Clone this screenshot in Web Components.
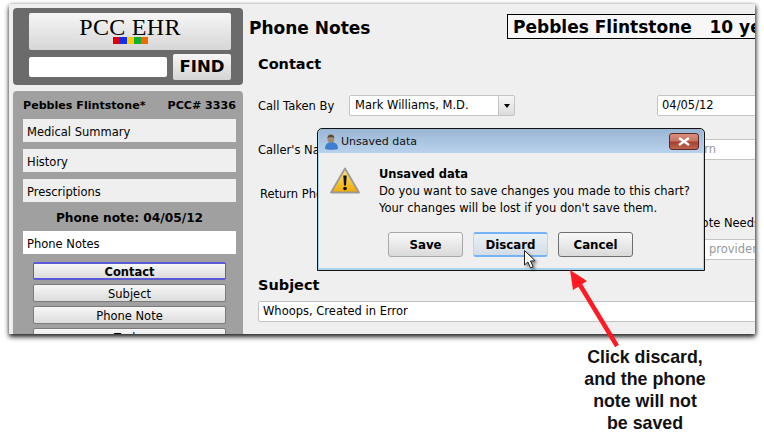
<!DOCTYPE html>
<html lang="en">
<head>
<meta charset="utf-8">
<title>Phone Notes</title>
<style>
  html, body { margin: 0; height: 100%; background: #fff; }
  body { font-family: "DejaVu Sans", sans-serif; overflow: hidden; }
</style>
</head>
<body>
<pcc-shot>
  <pcc-sidebar slot="side">
    <side-item>Medical Summary</side-item>
    <side-item>History</side-item>
    <side-item>Prescriptions</side-item>
    <side-label>Phone note: 04/05/12</side-label>
    <side-item active>Phone Notes</side-item>
    <nav-btn current>Contact</nav-btn>
    <nav-btn>Subject</nav-btn>
    <nav-btn>Phone Note</nav-btn>
    <nav-btn>Tasks</nav-btn>
  </pcc-sidebar>
  <phone-form slot="main"></phone-form>
  <unsaved-dialog slot="over"></unsaved-dialog>
  <discard-callout slot="note"></discard-callout>
</pcc-shot>

<script>
// helper: every element gets open shadow root from a string
function shadow(el, html) {
    el.attachShadow({ mode: "open" }).innerHTML = html;
}

class PccShot extends HTMLElement {
    connectedCallback() {
        shadow(this, `
        <style>
            :host { display: block; width: 764px; height: 433px; position: relative; overflow: hidden; background: #fff; }
            .frame {
                position: absolute; left: 9px; top: 4px; width: 746px; height: 330px;
                background: #efefef; overflow: hidden;
                box-shadow: 0 3px 5px rgba(0,0,0,.75), 1px 1px 4px rgba(0,0,0,.5);
                display: flex;
            }
            .side { flex: 0 0 234px; }
            .main { flex: 1; min-width: 0; }
        </style>
        <div class="frame">
            <div class="side"><slot name="side"></slot></div>
            <div class="main"><slot name="main"></slot></div>
        </div>
        <slot name="over"></slot>
        <slot name="note"></slot>`);
    }
}

class PccSidebar extends HTMLElement {
    connectedCallback() {
        shadow(this, `
        <style>
            :host { display: block; padding: 4px 0 0 4px; font-size: 12px; color: #000; }
            .top {
                width: 230px; height: 77px; box-sizing: border-box; background: #6b6b6b; border-radius: 4px;
                padding: 5px 12px 0 16px; display: flex; flex-direction: column; gap: 4px;
            }
            .logo {
                height: 37px; border-radius: 2px; background: linear-gradient(#f6f6f6, #d6d6d6);
                display: flex; flex-direction: column; align-items: center;
            }
            .logo b {
                font: 400 24px/22px "Liberation Serif", serif; color: #000; margin-top: 3px; letter-spacing: .3px;
            }
            .chips { display: flex; margin-top: -1px; }
            .chips i { width: 7px; height: 7px; }
            .find { display: flex; align-items: center; gap: 6px; }
            .find span { width: 138px; height: 20px; background: #fff; border-radius: 2px; }
            .find b {
                width: 58px; height: 26px; line-height: 26px; text-align: center; border-radius: 2px;
                background: linear-gradient(#f6f6f6, #d4d4d4); font-size: 16.5px;
            }
            .panel {
                margin-top: 6px; width: 230px; height: 300px; box-sizing: border-box; background: #a0a0a0;
                border-radius: 4px 4px 0 0; padding: 0 7px 0 10px;
            }
            .who { height: 28px; display: flex; justify-content: space-between; align-items: center; font-weight: 700; font-size: 11.1px; padding-top: 1px; box-sizing: border-box; }
            .list { display: flex; flex-direction: column; }
        </style>
        <div class="top">
            <div class="logo">
                <b>PCC EHR</b>
                <div class="chips">
                    <i style="background:#e00000"></i><i style="background:#1030f0"></i><i style="background:#ffcc00"></i><i style="background:#10b030"></i><i style="background:#f06800"></i>
                </div>
            </div>
            <div class="find"><span></span><b>FIND</b></div>
        </div>
        <div class="panel">
            <div class="who"><span>Pebbles Flintstone*</span><span>PCC# 3336</span></div>
            <div class="list"><slot></slot></div>
        </div>`);
    }
}

class SideItem extends HTMLElement {
    connectedCallback() {
        shadow(this, `
        <style>
            :host { display: block; height: 23px; line-height: 26px; padding-left: 4px; background: #efefef; margin-bottom: 7px; font-size: 11.5px; }
            :host([active]) { background: #fff; margin-bottom: 8px; }
        </style><slot></slot>`);
    }
}

class SideLabel extends HTMLElement {
    connectedCallback() {
        shadow(this, `
        <style>
            :host { display: block; height: 23px; line-height: 20px; margin-top: -1px; text-align: center; font-weight: 700; font-size: 12.2px; }
        </style><slot></slot>`);
    }
}

class NavBtn extends HTMLElement {
    connectedCallback() {
        shadow(this, `
        <style>
            :host {
                display: block; box-sizing: border-box; width: 193px; height: 18px; margin: 0 0 4px 10px;
                border: 1px solid #7b7b7b; border-radius: 2px; background: linear-gradient(#f7f7f7, #dcdcdc);
                text-align: center; line-height: 18px; font-size: 11.5px;
            }
            :host([current]) { font-weight: 700; border: 1px solid #5a5ad8; border-width: 2px 1px; line-height: 16px; }
        </style><slot></slot>`);
    }
}

class TextField extends HTMLElement {
    connectedCallback() {
        shadow(this, `
        <style>
            :host {
                display: block; box-sizing: border-box; height: 21px; line-height: 19px; padding: 0 4px;
                background: #fff; border: 1px solid #c4c4c4; border-radius: 2px; font-size: 11.5px; white-space: nowrap; overflow: hidden;
            }
            :host([hint]) { color: #999; }
        </style><slot></slot>`);
    }
}

class PhoneForm extends HTMLElement {
    connectedCallback() {
        shadow(this, `
        <style>
            :host { display: block; width: 512px; height: 330px; overflow: hidden; font-size: 11.5px; color: #000; }
            .head { display: grid; grid-template-columns: 258px 300px; padding: 10px 0 0 6px; height: 25px; }
            h1 { margin: 0; font-size: 17px; line-height: 28px; font-weight: 700; }
            .pt { border: 1.5px solid #000; box-sizing: border-box; height: 25px; line-height: 25px; padding-left: 5px; background: #f7f7f7; font-size: 17px; font-weight: 700; white-space: pre; }
            .body { padding-left: 15px; }
            h2 { margin: 0; font-size: 14.5px; line-height: 20px; font-weight: 700; }
            .row { display: grid; grid-template-columns: 91px 166px 142px 110px; align-items: center; height: 21px; white-space: nowrap; }
            .sel { display: flex; height: 21px; box-sizing: border-box; border: 1px solid #c4c4c4; border-radius: 2px; background: #fff; }
            .sel span { flex: 1; padding-left: 5px; line-height: 19px; }
            .sel em { width: 15px; border-left: 1px solid #c4c4c4; background: linear-gradient(#f6f6f6, #dcdcdc); display: flex; align-items: center; justify-content: center; }
            .sel em::after { content: ""; border: 3.5px solid transparent; border-top: 4px solid #000; border-bottom: 0; }
            .need { margin: 11px 0 0 435px; white-space: nowrap; height: 16px; line-height: 16px; }
        </style>
        <div class="head"><h1>Phone Notes</h1><div class="pt">Pebbles Flintstone   10 years</div></div>
        <div class="body">
            <h2 style="margin-top:15px">Contact</h2>
            <div class="row" style="margin-top:21px">
                <span>Call Taken By</span>
                <div class="sel"><span>Mark Williams, M.D.</span><em></em></div>
                <span></span>
                <text-field>04/05/12</text-field>
            </div>
            <div class="row" style="margin-top:23px">
                <span>Caller's Name</span><span></span><span></span>
                <text-field hint style="padding-left:20px">Return</text-field>
            </div>
            <div class="row" style="margin-top:23px;padding-left:2px;grid-template-columns:89px 1fr"><span>Return Phone</span></div>
            <div class="need">Note Needs</div>
            <div style="margin:8px 0 0 399px;width:110px"><text-field hint style="padding-left:51px">provider</text-field></div>
            <h2 style="margin-top:15px">Subject</h2>
            <text-field style="margin-top:6px;width:510px">Whoops, Created in Error</text-field>
        </div>`);
    }
}

class DlgBtn extends HTMLElement {
    connectedCallback() {
        shadow(this, `
        <style>
            :host {
                display: block; box-sizing: border-box; width: 75px; height: 25px; line-height: 24px; text-align: center;
                border: 1px solid #a8a8a8; border-radius: 3px; background: linear-gradient(#f8f8f8, #dadada);
                font-size: 11.8px; font-weight: 700;
            }
            :host([hot]) { border: 1px solid #c4d4e4; border-top: 2px solid #74b4f4; border-bottom: 2px solid #74b4f4; line-height: 22px; background: linear-gradient(#eaf0f6, #d4dce6); }
            :host([dark]) { border-color: #6e6e6e; }
        </style><slot></slot>`);
    }
}

class UnsavedDialog extends HTMLElement {
    connectedCallback() {
        shadow(this, `
        <style>
            :host {
                position: absolute; left: 317px; top: 128px; width: 388px; height: 143px; box-sizing: border-box;
                border: 1px solid #111; border-radius: 5px 5px 0 0; background: #a9d4ee; padding: 0 1px 2px 1px;
                font-size: 11.5px; color: #000; display: flex; flex-direction: column;
            }
            .bar {
                height: 24px; display: flex; align-items: center; gap: 2px; padding: 0 4px 0 5px;
                background: linear-gradient(#9ab6d4, #b9d1ec); border-radius: 4px 4px 0 0;
            }
            .bar span { flex: 1; color: #111; font-size: 11px; padding-top: 1px; }
            .close {
                width: 30px; height: 17px; box-sizing: border-box; border: 1px solid #5a2a28; border-radius: 3px;
                background: linear-gradient(#d88c7c 0, #c87464 45%, #a84030 55%, #bc6450 100%);
                display: flex; align-items: center; justify-content: center;
            }
            .pane { flex: 1; background: #efefef; display: flex; flex-direction: column; padding: 13px 0 0 11px; }
            .msg { display: flex; gap: 19px; height: 66px; }
            .msg svg { flex: none; margin-top: 1px; }
            .msg b { display: block; line-height: 17px; }
            .msg p { margin: 0; line-height: 17px; white-space: nowrap; }
            .acts { display: flex; gap: 10px; padding-left: 58px; }
        </style>
        <div class="bar">
            <svg width="15" height="17" viewBox="0 0 15 17"><path d="M1 16c0-5 3-7 6.500-7s6.500 2 6.500 7c-2 1-11 1-13 0Z" fill="#3f7fd0"/><ellipse cx="6.800" cy="5.500" rx="3.400" ry="4.300" fill="#a58a72"/><path d="M3.400 5C3.800 .5 10 .5 10.400 5 8 3.800 6 3.800 3.400 5Z" fill="#54483c"/></svg>
            <span>Unsaved data</span>
            <div class="close"><svg width="14" height="9" viewBox="0 0 14 9"><path d="M2 1l10 7M12 1L2 8" stroke="#fff" stroke-width="2.400"/></svg></div>
        </div>
        <div class="pane">
            <div class="msg">
                <svg width="30" height="27" viewBox="0 0 30 27"><defs><linearGradient id="w" x1="0" y1="0" x2="0" y2="1"><stop offset="0" stop-color="#ffe680"/><stop offset="1" stop-color="#f0a800"/></linearGradient></defs><path d="M15 1.500L29 25.500H1Z" fill="url(#w)" stroke="#9a9a9a" stroke-width="1.800" stroke-linejoin="round"/><path d="M13.300 8.500h3.400l-.7 10h-2Z" fill="#111"/><circle cx="15" cy="21.500" r="1.800" fill="#111"/></svg>
                <div><b>Unsaved data</b><p>Do you want to save changes you made to this chart?</p><p>Your changes will be lost if you don't save them.</p></div>
            </div>
            <div class="acts">
                <dlg-btn>Save</dlg-btn>
                <dlg-btn hot>Discard</dlg-btn>
                <dlg-btn dark>Cancel</dlg-btn>
            </div>
        </div>`);
    }
}

class DiscardCallout extends HTMLElement {
    connectedCallback() {
        shadow(this, `
        <style>
            :host { display: block; }
            svg { position: absolute; left: 0; top: 0; }
            .cursor { filter: drop-shadow(2px 2px 1.5px rgba(0,0,0,.45)); }
            p {
                position: absolute; left: 565px; top: 346px; width: 160px; margin: 0; text-align: center;
                font: 700 17.8px/22px "Liberation Sans", sans-serif; color: #111;
            }
        </style>
        <svg width="764" height="433" viewBox="0 0 764 433">
            <path d="M617 346L580 285" stroke="#ff1a24" stroke-width="4.500" fill="none"/>
            <path d="M570 270L587 281 573 290Z" fill="#ff1a24"/>
            <path class="cursor" d="M524.500 250.500V265l3.400-3 2.600 6 2.600-1.200-2.600-5.800 4.600-.2Z" fill="#fff" stroke="#222" stroke-width="1"/>
        </svg>
        <p>Click discard,<br>and the phone<br>note will not<br>be saved</p>`);
    }
}

customElements.define("pcc-shot", PccShot);
customElements.define("pcc-sidebar", PccSidebar);
customElements.define("side-item", SideItem);
customElements.define("side-label", SideLabel);
customElements.define("nav-btn", NavBtn);
customElements.define("text-field", TextField);
customElements.define("phone-form", PhoneForm);
customElements.define("dlg-btn", DlgBtn);
customElements.define("unsaved-dialog", UnsavedDialog);
customElements.define("discard-callout", DiscardCallout);
</script>
</body>
</html>
